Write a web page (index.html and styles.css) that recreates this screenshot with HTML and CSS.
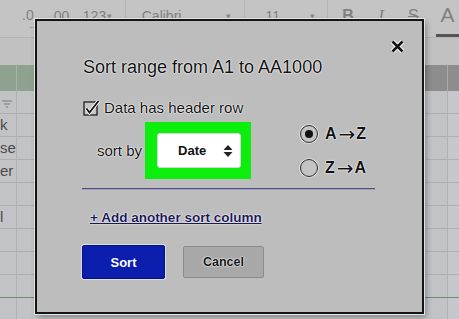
FILE: index.html
```html
<!DOCTYPE html>
<html lang="en">
<head>
    <meta charset="UTF-8">
    <meta name="viewport" content="width=device-width, initial-scale=1.0">
    <title>Sort range</title>
    <link rel="stylesheet" href="styles.css">
</head>
<body>
    <div class="screen">
        <div class="toolbar">
            <span class="tool t-dec0">.0<span class="sub">&larr;</span></span>
            <span class="tool t-dec2">.00</span>
            <span class="tool t-num">123<span class="caret">&#9662;</span></span>
            <span class="sep"></span>
            <span class="tool t-font">Calibri<span class="caret">&#9662;</span></span>
            <span class="sep"></span>
            <span class="tool t-size">11<span class="caret">&#9662;</span></span>
            <span class="sep"></span>
            <span class="tool t-bold">B</span>
            <span class="tool t-italic">I</span>
            <span class="tool t-strike">S</span>
            <span class="tool t-color">A<span class="color-bar"></span></span>
        </div>
        <div class="formula"></div>

        <div class="col-head">
            <div class="c0"></div>
            <div class="c1"></div>
            <div class="c1b"></div>
            <div class="c2"></div>
        </div>

        <div class="rows">
            <div class="row">
                <div class="c0">
                    <svg class="filter" width="10" height="8" viewBox="0 0 10 8">
                        <path d="M0 1H10M2 4H8M4 7H6" stroke="#7a7a7a" stroke-width="1.2"/>
                    </svg>
                </div>
                <div class="c1"></div><div class="c2"></div>
            </div>
            <div class="row"><div class="c0 cut-k">k</div><div class="c1"></div><div class="c2"></div></div>
            <div class="row"><div class="c0">se</div><div class="c1"></div><div class="c2"></div></div>
            <div class="row"><div class="c0">er</div><div class="c1"></div><div class="c2"></div></div>
            <div class="row"><div class="c0"></div><div class="c1"></div><div class="c2"></div></div>
            <div class="row"><div class="c0 cut-l">l</div><div class="c1"></div><div class="c2"></div></div>
            <div class="row"><div class="c0"></div><div class="c1"></div><div class="c2"></div></div>
            <div class="row"><div class="c0"></div><div class="c1"></div><div class="c2"></div></div>
            <div class="row row-last"><div class="c0"></div><div class="c1"></div><div class="c2"></div></div>
            <div class="row"><div class="c0"></div><div class="c1"></div><div class="c2"></div></div>
        </div>

        <div class="dialog">
            <div class="dialog-top">
                <svg class="close" width="13" height="13" viewBox="0 0 13 13">
                    <path d="M1.5 1.5L11.5 11.5M11.5 1.5L1.5 11.5" stroke="#fff" stroke-width="4.5"/>
                    <path d="M1.5 1.5L11.5 11.5M11.5 1.5L1.5 11.5" stroke="#111" stroke-width="2.6"/>
                </svg>
            </div>
            <h1 class="title halo">Sort range from A1 to AA1000</h1>

            <div class="check-row">
                <svg class="checkbox" width="17" height="16" viewBox="0 0 17 16">
                    <rect x="1" y="2" width="13" height="13" fill="#c6c6c6" stroke="#1e1e1e" stroke-width="1.3"/>
                    <path d="M3.5 8.5L6.5 12.5L15.5 1" fill="none" stroke="#fff" stroke-width="3.6"/>
                    <path d="M3.5 8.5L6.5 12.5L15.5 1" fill="none" stroke="#111" stroke-width="1.8"/>
                </svg>
                <span class="halo">Data has header row</span>
            </div>

            <div class="sort-row">
                <span class="sort-label halo">sort by</span>
                <div class="highlight">
                    <div class="select">
                        <span>Date</span>
                        <svg width="10" height="14" viewBox="0 0 10 14">
                            <path d="M0.5 6L5 1L9.5 6Z M0.5 8L5 13L9.5 8Z" fill="#222"/>
                        </svg>
                    </div>
                </div>
                <div class="order">
                    <div class="radio-item">
                        <span class="radio checked"></span>
                        <span class="radio-label halo">A<span class="arr">&rarr;</span>Z</span>
                    </div>
                    <div class="radio-item">
                        <span class="radio"></span>
                        <span class="radio-label halo">Z<span class="arr">&rarr;</span>A</span>
                    </div>
                </div>
            </div>

            <div class="divider"></div>

            <a class="add-link halo" href="#">+ Add another sort column</a>

            <div class="buttons">
                <button type="button" class="btn btn-sort">Sort</button>
                <button type="button" class="btn btn-cancel halo">Cancel</button>
            </div>
        </div>
    </div>
</body>
</html>
```

FILE: styles.css
```css
* {
    box-sizing: border-box;
}
body {
    margin: 0;
    font-family: "Liberation Sans", Arial, sans-serif;
    background-color: #c2c3c6;
}
.screen {
    position: relative;
    width: 459px;
    height: 319px;
    overflow: hidden;
    background: #c2c3c6;
}

/* toolbar behind the dialog */
.toolbar {
    display: flex;
    height: 38px;
    padding-top: 8px;
    background: #c4c4c4;
    border-bottom: 1px solid #b4b4b4;
    color: #818181;
    font-size: 14px;
    line-height: 16px;
}
.tool {
    display: flex;
    justify-content: space-between;
}
.caret {
    font-size: 9px;
    color: #8a8a8a;
}
.t-dec0 {
    flex-direction: column;
    justify-content: flex-start;
    margin-left: 22px;
    width: 28px;
    line-height: 14px;
}
.sub {
    font-size: 8px;
    line-height: 6px;
    margin: 2px 0 0 6px;
}
.t-dec2 {
    width: 33px;
}
.t-num {
    width: 42px;
    padding-right: 13px;
}
.sep {
    width: 1px;
    height: 30px;
    margin-top: -8px;
    background: #b6b6b6;
}
.t-font {
    margin-left: 16px;
    width: 103px;
    padding-right: 13px;
}
.t-size {
    margin-left: 20px;
    width: 62px;
    padding-right: 12px;
}
.t-bold {
    margin-left: 14px;
    width: 36px;
    font-weight: bold;
    font-size: 16px;
}
.t-italic {
    width: 30px;
    font-family: "Liberation Serif", serif;
    font-style: italic;
    font-size: 17px;
}
.t-strike {
    width: 28px;
    font-size: 16px;
    text-decoration: line-through;
}
.t-color {
    flex-direction: column;
    align-items: center;
    width: 23px;
    margin-top: -4px;
    font-size: 21px;
    line-height: 22px;
}
.color-bar {
    width: 23px;
    height: 3px;
    margin-top: 1px;
    background: #555;
}
.formula {
    height: 27px;
    background: #c1c1c1;
}

/* grid */
.col-head {
    display: flex;
    height: 26px;
}
.col-head .c0 {
    width: 17px;
    background: #8fa290;
    border-right: 1px solid #a7b6a7;
}
.col-head .c1 {
    width: 330px;
    background: #8fa290;
}
.col-head .c1b {
    width: 101px;
    background: #8d8d8d;
    border-right: 1px solid #a9a9a9;
}
.col-head .c2 {
    flex: 1;
    background: #8d8d8d;
}
.row {
    display: flex;
    height: 23px;
    border-bottom: 1px solid #aeafb2;
}
.row .c0 {
    width: 17px;
    padding-right: 4px;
    text-align: right;
    font-size: 15px;
    line-height: 22px;
    color: #4a4a4a;
    border-right: 1px solid #b0b1b4;
    white-space: nowrap;
}
.row .cut-k {
    padding-right: 9px;
}
.row .cut-l {
    padding-right: 13px;
}
.row .c1 {
    width: 431px;
    border-right: 1px solid #b0b1b4;
}
.row .c2 {
    flex: 1;
    background: #c6c7cc;
}
.row-last {
    border-bottom: 1px solid #6f8b70;
}
.filter {
    margin-top: 9px;
}

/* dialog */
.dialog {
    position: absolute;
    left: 35px;
    top: 19px;
    width: 389px;
    height: 295px;
    padding: 19px 18px 0 46px;
    background: #bdbdbd;
    border: 2px solid #141414;
    box-shadow: 0 0 0 1px #e4e4e4, 2px 3px 6px rgba(0, 0, 0, 0.35);
    color: #111;
}
.halo {
    text-shadow: 0 0 1px #fff, 0 0 1px #fff, 0 0 2px #fff;
}
.dialog-top {
    display: flex;
    justify-content: flex-end;
    height: 14px;
}
.title {
    margin: 2px 0 0;
    font-size: 18px;
    line-height: 22px;
    font-weight: normal;
}
.check-row {
    display: flex;
    align-items: center;
    height: 16px;
    margin-top: 22px;
    font-size: 15px;
    line-height: 16px;
}
.checkbox {
    margin-right: 4px;
}
.sort-row {
    display: flex;
    align-items: center;
    height: 57px;
    margin-top: 6px;
}
.sort-label {
    margin-left: 14px;
    font-size: 15px;
}
.highlight {
    width: 106px;
    height: 57px;
    margin-left: 3px;
    padding: 11px 10px 11px 12px;
    background: #0cef0c;
}
.select {
    display: flex;
    align-items: center;
    justify-content: space-between;
    height: 35px;
    padding: 0 7px 0 20px;
    background: #fff;
    border: 1px solid #d6d6d6;
    border-radius: 3px;
    font-size: 13px;
    font-weight: bold;
}
.order {
    display: flex;
    flex-direction: column;
    gap: 15px;
    margin-left: 49px;
}
.radio-item {
    display: flex;
    align-items: center;
}
.radio {
    display: flex;
    align-items: center;
    justify-content: center;
    width: 18px;
    height: 18px;
    border: 1px solid #2a2a2a;
    border-radius: 50%;
    background: #c4c4c4;
    box-shadow: 0 0 0 1px #e2e2e2;
}
.radio.checked::after {
    content: "";
    width: 8px;
    height: 8px;
    border-radius: 50%;
    background: #111;
}
.radio-label {
    display: flex;
    align-items: center;
    margin-left: 7px;
    font-size: 16px;
    line-height: 18px;
    font-weight: bold;
}
.arr {
    font-family: "DejaVu Sans", sans-serif;
    font-weight: normal;
    font-size: 20px;
    margin: 1px 1px 0 2px;
}
.divider {
    width: 293px;
    height: 2px;
    margin: 9px 0 0 -1px;
    border-top: 1px solid #4e4e84;
    border-bottom: 1px solid #a0a0bc;
}
.add-link {
    display: block;
    width: max-content;
    margin: 20px 0 0 7px;
    font-size: 13.5px;
    line-height: 16px;
    font-weight: bold;
    color: #1a1a56;
}
.buttons {
    display: flex;
    align-items: flex-start;
    gap: 18px;
    margin: 19px 0 0 -1px;
}
.btn {
    font-family: "Liberation Sans", Arial, sans-serif;
    font-weight: bold;
    border-radius: 2px;
    padding: 0;
}
.btn-sort {
    width: 83px;
    height: 34px;
    background: #0b1eae;
    border: 1px solid #0a136c;
    box-shadow: 0 0 0 1px #d6def4;
    color: #fff;
    font-size: 13px;
}
.btn-cancel {
    width: 81px;
    height: 32px;
    margin-top: 1px;
    background: #a8a8a8;
    border: 1px solid #8c8c8c;
    color: #111;
    font-size: 12.5px;
}
```
